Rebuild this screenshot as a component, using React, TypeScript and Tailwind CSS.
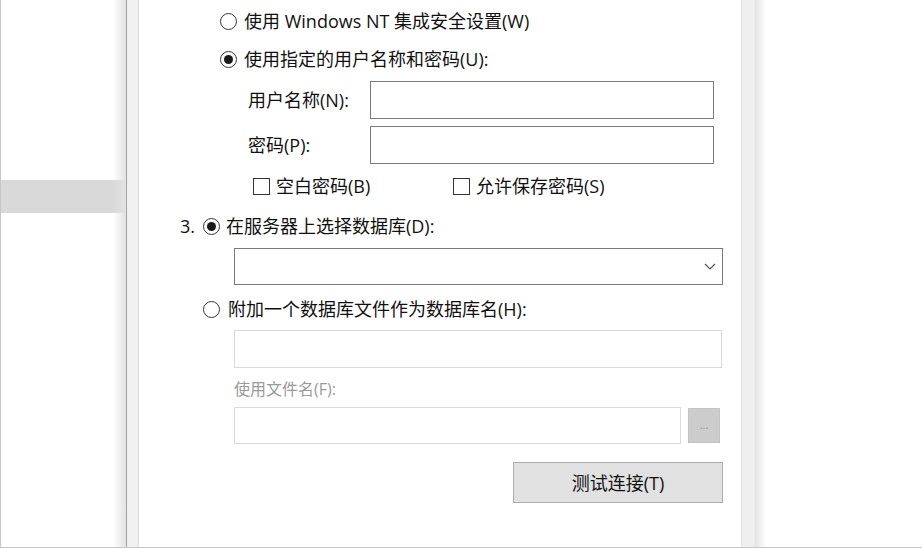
const font = { fontFamily: '"Open Sans", "Noto Sans CJK SC", sans-serif' };

const Radio = ({ checked }: { checked?: boolean }) => (
  <span className="flex h-[17px] w-[17px] shrink-0 items-center justify-center rounded-full border border-[#333333] bg-white">
    {checked && <span className="h-[9px] w-[9px] rounded-full bg-[#1a1a1a]" />}
  </span>
);

const Checkbox = () => (
  <span className="h-[17px] w-[17px] shrink-0 border border-[#333333] bg-white" />
);

const App = () => {
  return (
    <div className="w-[922px] h-[549px] bg-white overflow-hidden text-[18px] text-[#111111]" style={font}>
      <div className="flex h-[547px]">
        {/* left list panel */}
        <div className="relative w-[126px] shrink-0 border-l border-[#c6c6c6] bg-white">
          <div className="h-[180px]" />
          <div className="h-[33px] bg-[#d9d9d9]" />
          <div className="absolute right-0 top-0 h-full w-[13px] bg-gradient-to-r from-transparent to-[#e2e2e2]" />
        </div>
        <div className="w-px shrink-0 bg-[#a3a3a3]" />
        <div className="w-[12px] shrink-0 border-r border-[#dedede] bg-[#f0f0f0]" />

        {/* dialog content */}
        <div className="flex w-[602px] shrink-0 flex-col bg-white pt-[9px] leading-[24px]">
          <div className="flex h-[24px] items-center gap-[7px] pl-[81px]">
            <Radio />
            <span>使用 Windows NT 集成安全设置(W)</span>
          </div>
          <div className="mt-[14px] flex h-[24px] items-center gap-[7px] pl-[81px]">
            <Radio checked />
            <span>使用指定的用户名称和密码(U):</span>
          </div>
          <div className="mt-[10px] flex items-center pl-[109px]">
            <span className="w-[122px]">用户名称(N):</span>
            <div className="h-[38px] w-[344px] border border-[#7a7a7a] bg-white" />
          </div>
          <div className="mt-[7px] flex items-center pl-[109px]">
            <span className="w-[122px]">密码(P):</span>
            <div className="h-[38px] w-[344px] border border-[#7a7a7a] bg-white" />
          </div>
          <div className="mt-[10px] flex h-[24px] items-center pl-[114px]">
            <div className="flex w-[200px] items-center gap-[6px]">
              <Checkbox />
              <span>空白密码(B)</span>
            </div>
            <div className="flex items-center gap-[6px]">
              <Checkbox />
              <span>允许保存密码(S)</span>
            </div>
          </div>
          <div className="mt-[16px] flex h-[24px] items-center pl-[41px]">
            <span className="w-[23px]">3.</span>
            <Radio checked />
            <span className="ml-[6px]">在服务器上选择数据库(D):</span>
          </div>
          <div className="mt-[10px] pl-[95px]">
            <div className="flex h-[37px] w-[489px] items-center justify-end border border-[#7a7a7a] bg-white pr-[6px]">
              <svg width="12" height="7" viewBox="0 0 12 7" fill="none">
                <path d="M1 1 L6 6 L11 1" stroke="#555555" strokeWidth="1.2" />
              </svg>
            </div>
          </div>
          <div className="mt-[12px] flex h-[24px] items-center gap-[8px] pl-[64px]">
            <Radio />
            <span>附加一个数据库文件作为数据库名(H):</span>
          </div>
          <div className="mt-[9px] pl-[95px]">
            <div className="h-[38px] w-[488px] border border-[#d9d9d9] bg-white" />
          </div>
          <div className="mt-[10px] h-[22px] pl-[95px] text-[16px] leading-[22px] text-[#9a9a9a]">
            使用文件名(F):
          </div>
          <div className="mt-[7px] flex items-center pl-[95px]">
            <div className="h-[37px] w-[447px] border border-[#d9d9d9] bg-white" />
            <div className="ml-[7px] flex h-[35px] w-[32px] items-end justify-center border border-[#c4c4c4] bg-[#cccccc] pb-[12px] text-[11px] leading-none text-[#8f8f8f]">
              ...
            </div>
          </div>
          <div className="mt-[18px] flex pl-[374px]">
            <div className="flex h-[41px] w-[210px] items-center justify-center border border-[#adadad] bg-[#e1e1e1]">
              测试连接(T)
            </div>
          </div>
        </div>

        {/* right frame strip */}
        <div className="w-[15px] shrink-0 border-x border-[#e2e2e2] bg-[#efefef]" />
        <div className="w-[10px] shrink-0 bg-gradient-to-r from-[#e6e6e6] to-white" />
        <div className="flex-1 bg-white" />
      </div>
      <div className="h-px bg-[#c8c8c8]" />
      <div className="h-px bg-white" />
    </div>
  );
};

export default App;
